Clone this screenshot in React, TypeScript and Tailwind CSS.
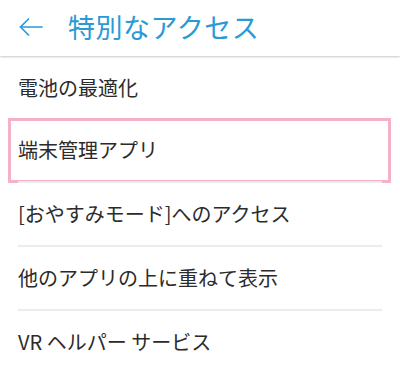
const ITEMS = [
  "電池の最適化",
  "端末管理アプリ",
  "[おやすみモード]へのアクセス",
  "他のアプリの上に重ねて表示",
  "VR ヘルパー サービス",
];

// thin back arrow like the ZenUI header
function BackArrow() {
  return (
    <svg viewBox="0 0 24 18" className="h-[18px] w-[24px]" fill="none" stroke="#2a9ad6" strokeWidth={1.7} strokeLinecap="round" strokeLinejoin="round">
      <path d="M23 9H1.5" />
      <path d="M9.5 1L1.5 9l8 8" />
    </svg>
  );
}

export default function App() {
  return (
    <div
      className="w-[400px] h-[369px] overflow-hidden bg-white"
      style={{ fontFamily: '"Noto Sans CJK JP", "Noto Sans", sans-serif' }}
    >
      {/* header */}
      <div className="relative z-10 flex h-[56px] items-center bg-white shadow-[0_1px_2px_rgba(0,0,0,0.22)]">
        <div className="ml-[19px] mt-[-2px] flex">
          <BackArrow />
        </div>
        <span className="ml-[25px] mt-[-3px] text-[27px] leading-none tracking-[0.5px] text-[#2a9ad6]">
          特別なアクセス
        </span>
      </div>

      <div className="flex flex-col">
        {ITEMS.map((label, i) => (
          <div key={label} className="relative">
            {i > 1 && <div className="mx-[18px] h-[2px] bg-[#ececec]" />}
            <div
              className={`flex items-center px-[18px] text-[20px] text-[#2b2b2b] ${
                i === 0 ? "h-[63px] pt-[1px]" : "h-[62px]"
              }`}
            >
              {label}
            </div>
            {i === 1 && (
              <div className="absolute left-[8px] right-[9px] top-[-1px] bottom-[-2px] border-[3px] border-[#f4b2ca]" />
            )}
          </div>
        ))}
      </div>
    </div>
  );
}
